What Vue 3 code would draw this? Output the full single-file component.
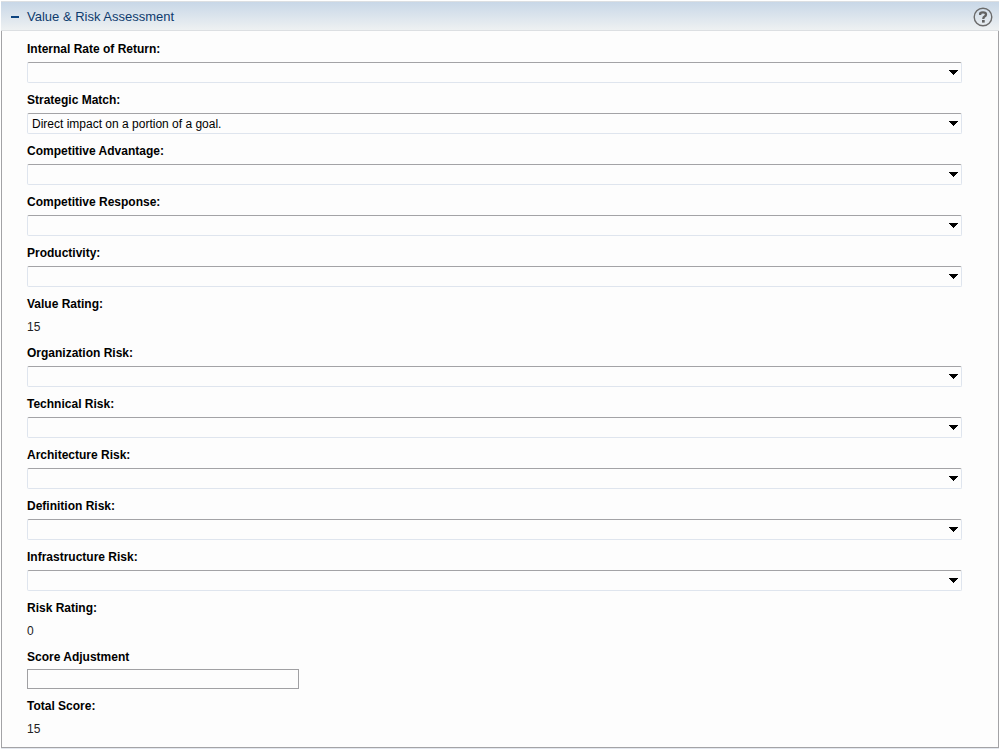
<script setup>
import { reactive, ref } from 'vue'

const open = ref(true)

const fields = reactive([
  { id: 'irr', label: 'Internal Rate of Return:', type: 'select', value: '' },
  { id: 'match', label: 'Strategic Match:', type: 'select', value: 'Direct impact on a portion of a goal.' },
  { id: 'advantage', label: 'Competitive Advantage:', type: 'select', value: '' },
  { id: 'response', label: 'Competitive Response:', type: 'select', value: '' },
  { id: 'productivity', label: 'Productivity:', type: 'select', value: '' },
  { id: 'value-rating', label: 'Value Rating:', type: 'output', value: '15' },
  { id: 'organization', label: 'Organization Risk:', type: 'select', value: '' },
  { id: 'technical', label: 'Technical Risk:', type: 'select', value: '' },
  { id: 'architecture', label: 'Architecture Risk:', type: 'select', value: '' },
  { id: 'definition', label: 'Definition Risk:', type: 'select', value: '' },
  { id: 'infrastructure', label: 'Infrastructure Risk:', type: 'select', value: '' },
  { id: 'risk-rating', label: 'Risk Rating:', type: 'output', value: '0' },
  { id: 'adjustment', label: 'Score Adjustment', type: 'text', value: '' },
  { id: 'total', label: 'Total Score:', type: 'output', value: '15' },
])
</script>

<template>
  <section class="panel">
    <header class="head">
      <button class="toggle" type="button" :aria-expanded="open" @click="open = !open">
        <svg class="minus" viewBox="0 0 8 2" aria-hidden="true"><rect width="8" height="2" fill="#0d4480" /></svg>
        <span>Value &amp; Risk Assessment</span>
      </button>
      <button class="help" type="button" aria-label="Help">
        <svg viewBox="0 0 20 20" aria-hidden="true">
          <circle cx="10" cy="10" r="8.8" fill="none" stroke="#6b6b6b" stroke-width="1.4" />
          <path d="M7.2 8V6.2Q8 5.3 10 5.3Q13 5.3 13 7.4Q13 8.7 11.6 9.5Q10.3 10.2 10.3 11.9" fill="none" stroke="#626262" stroke-width="2.3" />
          <rect x="9" y="13" width="2.7" height="2.6" fill="#626262" />
        </svg>
      </button>
    </header>
    <form v-if="open" class="body" @submit.prevent>
      <div v-for="f in fields" :key="f.id" class="field" :class="f.type">
        <label :for="f.id">{{ f.label }}</label>
        <div v-if="f.type === 'select'" class="combo">
          <select :id="f.id" v-model="f.value">
            <option value=""></option>
            <option v-if="f.value" :value="f.value">{{ f.value }}</option>
          </select>
          <svg class="arrow" viewBox="0 0 9 5" shape-rendering="crispEdges" aria-hidden="true">
            <path d="M0 0H9V1H8V2H7V3H6V4H5V5H4V4H3V3H2V2H1V1H0Z" fill="#000" />
          </svg>
        </div>
        <input v-else-if="f.type === 'text'" :id="f.id" v-model="f.value" type="text" />
        <output v-else :id="f.id">{{ f.value }}</output>
      </div>
    </form>
  </section>
</template>

<style>
body {
  background: #fff;
}
</style>

<style scoped>
.panel {
  margin: 1px 2px 0 1px;
  font-family: "Liberation Sans", Arial, sans-serif;
  font-size: 12px;
  color: #000;
  border-bottom: 1px solid #e3e7ee;
}
.head {
  display: flex;
  justify-content: space-between;
  align-items: center;
  box-sizing: border-box;
  height: 30px;
  padding: 2px 6px 0 10px;
  border: 1px solid #dcdfe2;
  border-width: 1px 0;
  background: linear-gradient(#c8d7e7, #eef1f2);
}
button {
  border: 0;
  padding: 0;
  background: none;
  font: inherit;
  cursor: pointer;
}
.toggle {
  display: flex;
  align-items: center;
  gap: 8px;
  font-size: 13px;
  line-height: 16px;
  color: #0e3b6e;
}
.minus {
  width: 8px;
  height: 2px;
}
.help svg {
  display: block;
  width: 20px;
  height: 20px;
}
.body {
  display: flex;
  flex-direction: column;
  gap: 9px;
  padding: 10px 36px 9px 25px;
  border: 1px solid #a3a3a6;
  border-top: 0;
  background: #fdfdfd;
}
.field {
  display: flex;
  flex-direction: column;
  align-items: flex-start;
  gap: 5px;
}
.field.text {
  gap: 4px;
}
.field.output {
  gap: 7px;
}
label {
  font-weight: bold;
  line-height: 16px;
}
.combo {
  position: relative;
  width: 100%;
}
select {
  display: block;
  appearance: none;
  box-sizing: border-box;
  width: 100%;
  height: 21px;
  margin: 0;
  padding: 0 20px 0 4px;
  border: 1px solid #dfe5ee;
  border-top-color: #a3a3a6;
  border-radius: 2px;
  background: #fdfdfd;
  font: inherit;
  color: #000;
}
.arrow {
  position: absolute;
  top: 8px;
  right: 4px;
  width: 9px;
  height: 5px;
  pointer-events: none;
}
input {
  box-sizing: border-box;
  width: 272px;
  max-width: 100%;
  height: 20px;
  padding: 0 4px;
  border: 1px solid #a0a0a3;
  background: #fdfdfd;
  font: inherit;
}
output {
  line-height: 17px;
  color: #222;
}
</style>
